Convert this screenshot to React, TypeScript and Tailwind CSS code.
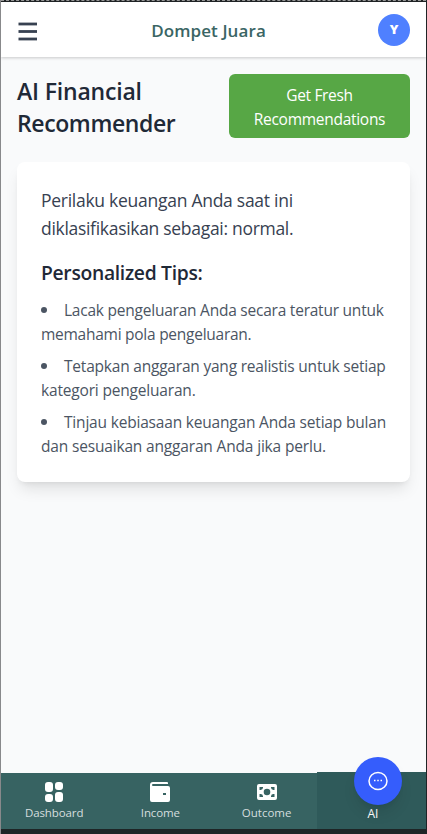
const tips = [
  [
    { text: 'Lacak pengeluaran Anda secara teratur untuk', track: 'tracking-[-0.23px]' },
    { text: 'memahami pola pengeluaran.', track: 'tracking-[-0.26px]' },
  ],
  [
    { text: 'Tetapkan anggaran yang realistis untuk setiap', track: 'tracking-[-0.21px]' },
    { text: 'kategori pengeluaran.', track: 'tracking-[-0.18px]' },
  ],
  [
    { text: 'Tinjau kebiasaan keuangan Anda setiap bulan', track: 'tracking-[-0.19px]' },
    { text: 'dan sesuaikan anggaran Anda jika perlu.', track: 'tracking-[-0.17px]' },
  ],
];

function DashboardIcon() {
  return (
    <svg width="20" height="20" viewBox="0 0 20 20" fill="currentColor">
      <rect x="1" y="0" width="8" height="10" rx="3" />
      <rect x="11" y="0" width="8" height="8" rx="3" />
      <rect x="1" y="12" width="8" height="8" rx="3" />
      <rect x="11" y="10" width="8" height="10" rx="3" />
    </svg>
  );
}

function WalletIcon() {
  return (
    <svg width="20" height="20" viewBox="0 0 20 20" fill="currentColor">
      <path fillRule="evenodd" d="M3 0H17a1 1 0 0 1 1 1V2H3a1 1 0 0 0 0 2h15a2 2 0 0 1 2 2v12a2 2 0 0 1-2 2H2a2 2 0 0 1-2-2V3A3 3 0 0 1 3 0ZM13 11v2h3v-2Z" />
    </svg>
  );
}

function CashIcon() {
  return (
    <svg width="20" height="16" viewBox="0 0 20 16" fill="currentColor">
      <path
        fillRule="evenodd"
        d="M2 0h16a2 2 0 0 1 2 2v12a2 2 0 0 1-2 2H2a2 2 0 0 1-2-2V2A2 2 0 0 1 2 0ZM2.500 3v3h1.200A2.500 2.500 0 0 0 6 3.800V3ZM14 3v.8A2.500 2.500 0 0 0 16.300 6h1.200V3ZM2.500 10v3H6v-.8A2.500 2.500 0 0 0 3.700 10ZM17.500 10h-1.200A2.500 2.500 0 0 0 14 12.200V13h3.500ZM10 4.700a3.300 3.300 0 1 0 0 6.600a3.300 3.300 0 0 0 0-6.600Z"
      />
    </svg>
  );
}

export default function App() {
  return (
    <div className="flex h-[834px] w-[427px] flex-col overflow-hidden border-r border-l border-r-[#1f2426] border-l-[#88898b] bg-[#f9fafb] font-['Open_Sans','Noto_Sans',sans-serif]">
      <div className="h-[2px] shrink-0 border-t border-dashed border-[#999] bg-[#202426]" />
      <header className="z-10 flex h-[55px] shrink-0 items-center justify-between bg-white px-4 shadow-[0_1px_3px_rgba(0,0,0,0.2)]">
        <div className="flex w-8 items-center pt-1 pl-[1px] text-[#374151]">
          <svg width="19" height="19" viewBox="0 0 19 19" fill="currentColor">
            <rect x="0.5" width="18.5" height="2.8" y="0.6" />
            <rect x="0.5" width="18.5" height="2.8" y="8.1" />
            <rect x="0.5" width="18.5" height="2.8" y="15.6" />
          </svg>
        </div>
        <h1 className="pt-[2px] pr-[10px] text-[17px] font-semibold tracking-[0.1px] whitespace-nowrap text-[#3a6564]">Dompet Juara</h1>
        <div className="flex size-8 items-center justify-center rounded-full bg-[#4f80ff] text-[13px] font-extrabold text-white">Y</div>
      </header>
      <main className="flex min-h-0 flex-1 flex-col px-4 pt-[17px]">
        <div className="flex h-16 items-start justify-between">
          <h2 className="pt-px text-[23px] leading-8 font-semibold text-[#1f2937]">
            <span className="block tracking-[-0.18px]">AI Financial</span>
            <span className="block tracking-[-0.39px]">Recommender</span>
          </h2>
          <button className="h-16 w-[181px] rounded-md bg-[#57a745] pt-px text-center text-[15.5px] leading-6 text-white">
            <span className="block tracking-[-0.35px]">Get Fresh</span>
            <span className="block tracking-[-0.28px]">Recommendations</span>
          </button>
        </div>
        <section className="mt-6 h-80 rounded-lg bg-white p-6 whitespace-nowrap shadow-lg">
          <p className="text-[17.5px] leading-7 text-[#374151]">
            <span className="block tracking-[-0.27px]">Perilaku keuangan Anda saat ini</span>
            <span className="block tracking-[-0.3px]">diklasifikasikan sebagai: normal.</span>
          </p>
          <h3 className="mt-[17px] text-[19.3px] leading-7 font-semibold tracking-[-0.3px] text-[#1f2937]">Personalized Tips:</h3>
          <ul className="mt-[11px] flex flex-col gap-2 text-[15.5px] leading-6 text-[#4b5563]">
            {tips.map(([first, second]) => (
              <li key={first.text}>
                <span className="flex items-center">
                  <span className="mr-[17px] size-[6px] shrink-0 rounded-full bg-[#4b5563]" />
                  <span className={first.track}>{first.text}</span>
                </span>
                <span className={`block ${second.track}`}>{second.text}</span>
              </li>
            ))}
          </ul>
        </section>
      </main>
      <nav className="relative flex h-14 shrink-0 bg-[#376362] text-[11.5px] text-[#d5dedf]">
        <div className="flex w-[106.25px] shrink-0 flex-col items-center pt-[9px]">
          <span className="text-white"><DashboardIcon /></span>
          <span className="mt-[3px] leading-4 tracking-[-0.1px]">Dashboard</span>
        </div>
        <div className="flex w-[106.25px] shrink-0 flex-col items-center pt-[9px]">
          <span className="text-white"><WalletIcon /></span>
          <span className="mt-[3px] leading-4 tracking-[-0.1px]">Income</span>
        </div>
        <div className="flex w-[106.25px] shrink-0 flex-col items-center pt-[11px]">
          <span className="text-white"><CashIcon /></span>
          <span className="mt-[5px] leading-4">Outcome</span>
        </div>
        <div className="-mt-[1.5px] -ml-[2.5px] flex w-[111.5px] shrink-0 flex-col items-center bg-[#2f5a5a] pt-[34px] text-white">
          <span className="text-xs leading-4">AI</span>
        </div>
        <button className="absolute top-[-16px] right-6 flex size-12 items-center justify-center rounded-full bg-[#355dfc] text-white shadow-lg">
          <svg width="20" height="20" viewBox="0 0 20 20" fill="none" stroke="currentColor" strokeWidth="1.500">
            <ellipse cx="10" cy="10" rx="9" ry="8.500" />
            <path d="M6 9.500h1.500M9.250 9.500h1.500M12.500 9.500h1.500" />
          </svg>
        </button>
      </nav>
      <div className="h-[5px] shrink-0 bg-[#1e2526]" />
    </div>
  );
}
